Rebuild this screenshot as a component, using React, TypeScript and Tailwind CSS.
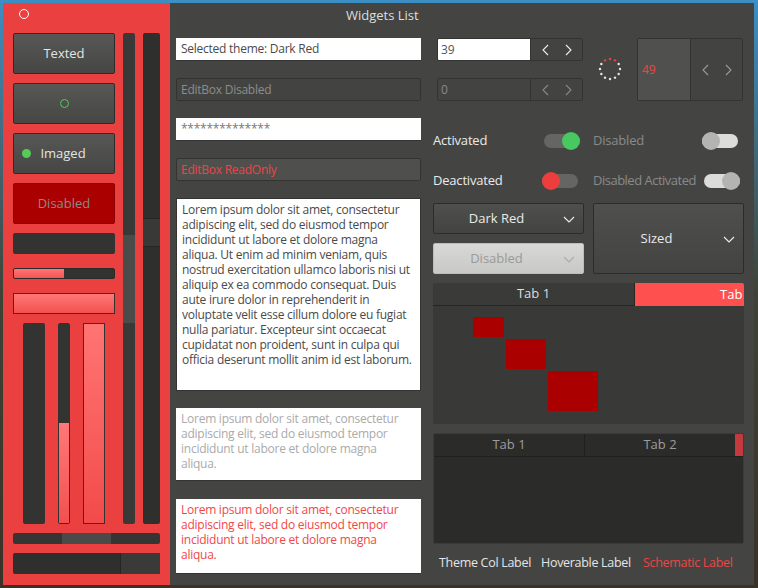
import React from 'react';

const LOREM =
  'Lorem ipsum dolor sit amet, consectetur adipiscing elit, sed do eiusmod tempor incididunt ut labore et dolore magna aliqua. Ut enim ad minim veniam, quis nostrud exercitation ullamco laboris nisi ut aliquip ex ea commodo consequat. Duis aute irure dolor in reprehenderit in voluptate velit esse cillum dolore eu fugiat nulla pariatur. Excepteur sint occaecat cupidatat non proident, sunt in culpa qui officia deserunt mollit anim id est laborum.';
const LOREM_SHORT =
  'Lorem ipsum dolor sit amet, consectetur adipiscing elit, sed do eiusmod tempor incididunt ut labore et dolore magna aliqua.';

function Chevron({ dir, color = '#e8e8e8' }: { dir: 'left' | 'right' | 'down'; color?: string }) {
  const pts = dir === 'left' ? '7,1 2,6 7,11' : dir === 'right' ? '2,1 7,6 2,11' : '1,2 6,7 11,2';
  const w = dir === 'down' ? 12 : 9;
  const h = dir === 'down' ? 9 : 12;
  return (
    <svg width={w} height={h} viewBox={`0 0 ${w} ${h}`} fill="none">
      <polyline points={pts} stroke={color} strokeWidth="1.1" />
    </svg>
  );
}

function Spinner() {
  const dots = Array.from({ length: 12 }, (_, i) => {
    const a = (i / 12) * Math.PI * 2 - Math.PI / 2;
    return { x: 12 + Math.cos(a) * 10, y: 12 + Math.sin(a) * 10, red: i === 0 || i === 1 || i === 11 };
  });
  return (
    <svg width="24" height="24" viewBox="0 0 24 24">
      {dots.map((d, i) => (
        <circle key={i} cx={d.x} cy={d.y} r="1.2" fill={d.red ? '#e84545' : '#e6e6e6'} />
      ))}
    </svg>
  );
}

function Toggle({ on, knob, track }: { on: boolean; knob: string; track: string }) {
  return (
    <div className="relative w-[36px] h-[18px] shrink-0 flex items-center">
      <div className="w-full h-[14px] rounded-full" style={{ background: track }} />
      <div
        className={`absolute top-0 w-[18px] h-[18px] rounded-full ${on ? 'right-0' : 'left-0'}`}
        style={{ background: knob }}
      />
    </div>
  );
}

function Button({ children, disabled }: { children: React.ReactNode; disabled?: boolean }) {
  return (
    <div
      className={`h-[41px] rounded-[2px] border flex items-center justify-center text-[13px] ${
        disabled
          ? 'bg-[#aa0000] border-[#8a0000] text-[#8a8a8a]'
          : 'bg-gradient-to-b from-[#575855] to-[#464744] border-[#2c2d2b] text-[#e4e4e4]'
      }`}
    >
      {children}
    </div>
  );
}

function SpinBox({ value, disabled }: { value: string; disabled?: boolean }) {
  return (
    <div className="h-[23px] flex rounded-[2px] border border-[#333432] overflow-hidden">
      <div
        className={`w-[92px] flex items-center pl-[3px] text-[12px] ${
          disabled ? 'bg-[#434441] text-[#8a8a8a]' : 'bg-white text-[#555]'
        }`}
      >
        {value}
      </div>
      <div className="flex-1 flex items-center justify-center gap-[14px] bg-[#434441] border-l border-[#333432]">
        <Chevron dir="left" color={disabled ? '#888' : '#eee'} />
        <Chevron dir="right" color={disabled ? '#888' : '#eee'} />
      </div>
    </div>
  );
}

export default function App() {
  return (
    <div
      className="w-[758px] h-[588px] p-[3px] bg-gradient-to-b from-[#3c8fc4] via-[#3d4336] to-[#3a3127] overflow-hidden"
      style={{ fontFamily: '"Open Sans", "Noto Sans", sans-serif' }}
    >
      <div className="w-[751px] h-[582px] flex bg-[#444542] overflow-hidden">
        {/* left red panel */}
        <div className="w-[167px] shrink-0 h-full bg-[#ea4040] flex flex-col px-[10px]">
          <div className="h-[30px] shrink-0 flex items-start pt-[6px] pl-[6px]">
            <div className="w-[10px] h-[10px] rounded-full border-[1.5px] border-white" />
          </div>
          <div className="flex gap-[8px] shrink-0">
            <div className="w-[102px] shrink-0 flex flex-col">
              <Button>Texted</Button>
              <div className="mt-[9px]">
                <Button>
                  <div className="w-[9px] h-[9px] rounded-full border border-[#55cc55]" />
                </Button>
              </div>
              <div className="mt-[9px]">
                <Button>
                  <div className="flex items-center gap-[9px] -ml-[20px]">
                    <div className="w-[9px] h-[9px] rounded-full bg-[#55cc55]" />
                    <span>Imaged</span>
                  </div>
                </Button>
              </div>
              <div className="mt-[9px]">
                <Button disabled>Disabled</Button>
              </div>
              <div className="mt-[9px] h-[21px] rounded-[2px] bg-[#333331]" />
              <div className="mt-[14px] h-[11px] rounded-[2px] bg-[#333331] border border-[#2a2a28] overflow-hidden">
                <div className="w-[50%] h-full bg-gradient-to-b from-[#ff7575] to-[#f25555]" />
              </div>
              <div className="mt-[14px] h-[21px] border border-[#333331] bg-gradient-to-b from-[#ff7878] to-[#f24f4f]" />
              <div className="mt-[9px] h-[201px] flex pl-[10px]">
                <div className="w-[22px] h-full rounded-[2px] bg-[#333331]" />
                <div className="w-[12px] h-full ml-[13px] rounded-[2px] bg-[#333331] flex flex-col justify-end border border-[#333331]">
                  <div className="h-[100px] bg-gradient-to-b from-[#ff7777] to-[#f25050]" />
                </div>
                <div className="w-[22px] h-full ml-[13px] border border-[#333331] bg-gradient-to-b from-[#ff7474] to-[#f24a4a]" />
              </div>
            </div>
            <div className="w-[12px] shrink-0 h-[491px] bg-[#393a37] rounded-[2px] flex flex-col">
              <div className="h-[202px]" />
              <div className="h-[88px] bg-[#4b4c49]" />
            </div>
            <div className="w-[17px] shrink-0 h-[491px] bg-[#2f302e] rounded-[2px] flex flex-col">
              <div className="h-[185px]" />
              <div className="h-[29px] bg-[#393a37] border-y border-[#252624]" />
            </div>
          </div>
          <div className="mt-[9px] h-[11px] shrink-0 rounded-[2px] bg-[#353634] flex">
            <div className="w-[49px]" />
            <div className="w-[49px] h-full bg-[#4a4b48]" />
          </div>
          <div className="mt-[9px] h-[21px] shrink-0 rounded-[2px] bg-[#2f302e] flex justify-end">
            <div className="w-[40px] h-full bg-[#3a3b38] border-l border-[#262725]" />
          </div>
        </div>

        {/* main area */}
        <div className="flex-1 flex flex-col">
          <div className="h-[33px] shrink-0 flex items-start pt-[3px] text-[13px] text-[#dedede]">
            <span className="ml-[176px]">Widgets List</span>
          </div>
          <div className="flex pl-[6px] shrink-0">
            {/* middle column */}
            <div className="w-[245px] shrink-0 flex flex-col text-[12px] tracking-[-0.25px]">
              <div className="mt-[2px] h-[23px] bg-white border-b border-[#333] flex items-center px-[5px] text-[#4a4a4a]">
                Selected theme: Dark Red
              </div>
              <div className="mt-[17px] h-[23px] bg-[#434441] border border-[#333432] rounded-[2px] flex items-center px-[4px] text-[#8c8c8c]">
                EditBox Disabled
              </div>
              <div className="mt-[17px] h-[23px] bg-white border-b border-[#333] flex items-center px-[5px] text-[#777]">
                **************
              </div>
              <div className="mt-[17px] h-[23px] bg-[#4f504d] border border-[#333432] rounded-[2px] flex items-center px-[4px] text-[#ee4444]">
                EditBox ReadOnly
              </div>
              <div className="mt-[17px] h-[193px] bg-white border border-[#333] pl-[5px] pr-[4px] pt-[3px] leading-[15px] text-[#4a4a4a]">
                {LOREM}
              </div>
              <div className="mt-[17px] h-[73px] bg-white border-b border-[#333] pl-[5px] pr-[12px] pt-[3px] leading-[15px] text-[#aaaaaa]">
                {LOREM_SHORT}
              </div>
              <div className="mt-[18px] h-[75px] bg-white border-b border-[#333] pl-[5px] pr-[12px] pt-[3px] leading-[15px] text-[#f04848]">
                {LOREM_SHORT}
              </div>
            </div>

            {/* right column */}
            <div className="w-[311px] shrink-0 ml-[12px] flex flex-col">
              <div className="mt-[2px] flex h-[63px]">
                <div className="w-[146px] ml-[4px] flex flex-col gap-[17px]">
                  <SpinBox value="39" />
                  <SpinBox value="0" disabled />
                </div>
                <div className="w-[54px] flex items-center justify-center pb-[2px]">
                  <Spinner />
                </div>
                <div className="w-[106px] h-full flex rounded-[2px] border border-[#333432] overflow-hidden">
                  <div className="w-[52px] bg-[#50514e] flex items-center pl-[4px] text-[12px] text-[#ee4444]">49</div>
                  <div className="flex-1 flex items-center justify-center gap-[14px] bg-[#434441] border-l border-[#333432]">
                    <Chevron dir="left" color="#999" />
                    <Chevron dir="right" color="#999" />
                  </div>
                </div>
              </div>

              <div className="mt-[31px] flex items-center h-[18px] text-[13px] whitespace-nowrap tracking-[-0.2px]">
                <span className="w-[111px] text-[#eaeaea]">Activated</span>
                <Toggle on knob="#47c860" track="#656663" />
                <span className="ml-[13px] w-[109px] text-[#8a8a8a]">Disabled</span>
                <Toggle on={false} knob="#b4b5b2" track="#dcdcda" />
              </div>
              <div className="mt-[22px] flex items-center h-[18px] text-[13px] whitespace-nowrap tracking-[-0.2px]">
                <span className="w-[109px] text-[#eaeaea]">Deactivated</span>
                <Toggle on={false} knob="#ee3d3d" track="#656663" />
                <span className="ml-[15px] w-[111px] text-[#8a8a8a] tracking-[-0.5px]">Disabled Activated</span>
                <Toggle on knob="#b4b5b2" track="#dcdcda" />
              </div>

              <div className="mt-[13px] flex gap-[9px]">
                <div className="w-[151px] flex flex-col gap-[9px]">
                  <div className="h-[31px] rounded-[2px] border border-[#2c2d2b] bg-gradient-to-b from-[#4f504d] to-[#434441] flex items-center relative text-[13px] text-[#eaeaea]">
                    <span className="w-full text-center pr-[24px]">Dark Red</span>
                    <div className="absolute right-[8px] top-[11px]">
                      <Chevron dir="down" color="#eee" />
                    </div>
                  </div>
                  <div className="h-[31px] rounded-[2px] border border-[#bdbebb] bg-gradient-to-b from-[#d8d8d6] to-[#c8c8c6] flex items-center relative text-[13px] text-[#9a9a9a]">
                    <span className="w-full text-center pr-[24px]">Disabled</span>
                    <div className="absolute right-[8px] top-[11px]">
                      <Chevron dir="down" color="#aaa" />
                    </div>
                  </div>
                </div>
                <div className="w-[151px] h-[71px] rounded-[2px] border border-[#2c2d2b] bg-gradient-to-b from-[#4f504d] to-[#434441] flex items-center relative text-[13px] text-[#eaeaea]">
                  <span className="w-full text-center pr-[24px]">Sized</span>
                  <div className="absolute right-[8px] top-[31px]">
                    <Chevron dir="down" color="#eee" />
                  </div>
                </div>
              </div>

              {/* tabs 1 */}
              <div className="mt-[9px] h-[141px] flex flex-col bg-[#393937] rounded-[2px] overflow-hidden">
                <div className="h-[23px] shrink-0 flex text-[13px]">
                  <div className="w-[201px] bg-[#3a3a38] border-b border-[#262725] flex items-center justify-center text-[#dedede]">
                    Tab 1
                  </div>
                  <div className="flex-1 bg-[#ff5050] border-l border-[#262725] overflow-hidden flex items-center pl-[85px] text-white whitespace-nowrap">
                    Tab 2
                  </div>
                </div>
                <div className="flex-1 relative">
                  <div className="absolute left-[40px] top-[11px] w-[31px] h-[20px] bg-[#aa0000]" />
                  <div className="absolute left-[73px] top-[33px] w-[40px] h-[30px] bg-[#aa0000]" />
                  <div className="absolute left-[115px] top-[65px] w-[50px] h-[40px] bg-[#aa0000]" />
                </div>
              </div>

              {/* tabs 2 */}
              <div className="mt-[9px] h-[111px] flex flex-col bg-[#2b2c2a] border border-[#3b3c39] rounded-[2px] overflow-hidden">
                <div className="h-[23px] shrink-0 flex text-[13px] text-[#9c9c9c] border-b border-[#20211f]">
                  <div className="w-[151px] flex items-center justify-center border-r border-[#20211f]">Tab 1</div>
                  <div className="w-[150px] flex items-center justify-center">Tab 2</div>
                  <div className="flex-1 bg-[#c23a3c]" />
                </div>
                <div className="flex-1" />
              </div>

              <div className="mt-[10px] flex text-[12.5px] tracking-[-0.3px] whitespace-nowrap pl-[6px]">
                <span className="text-[#e4e4e4]">Theme Col Label</span>
                <span className="ml-[10px] text-[#e4e4e4]">Hoverable Label</span>
                <span className="ml-[12px] text-[#ee4444]">Schematic Label</span>
              </div>
            </div>
          </div>
        </div>
      </div>
    </div>
  );
}
